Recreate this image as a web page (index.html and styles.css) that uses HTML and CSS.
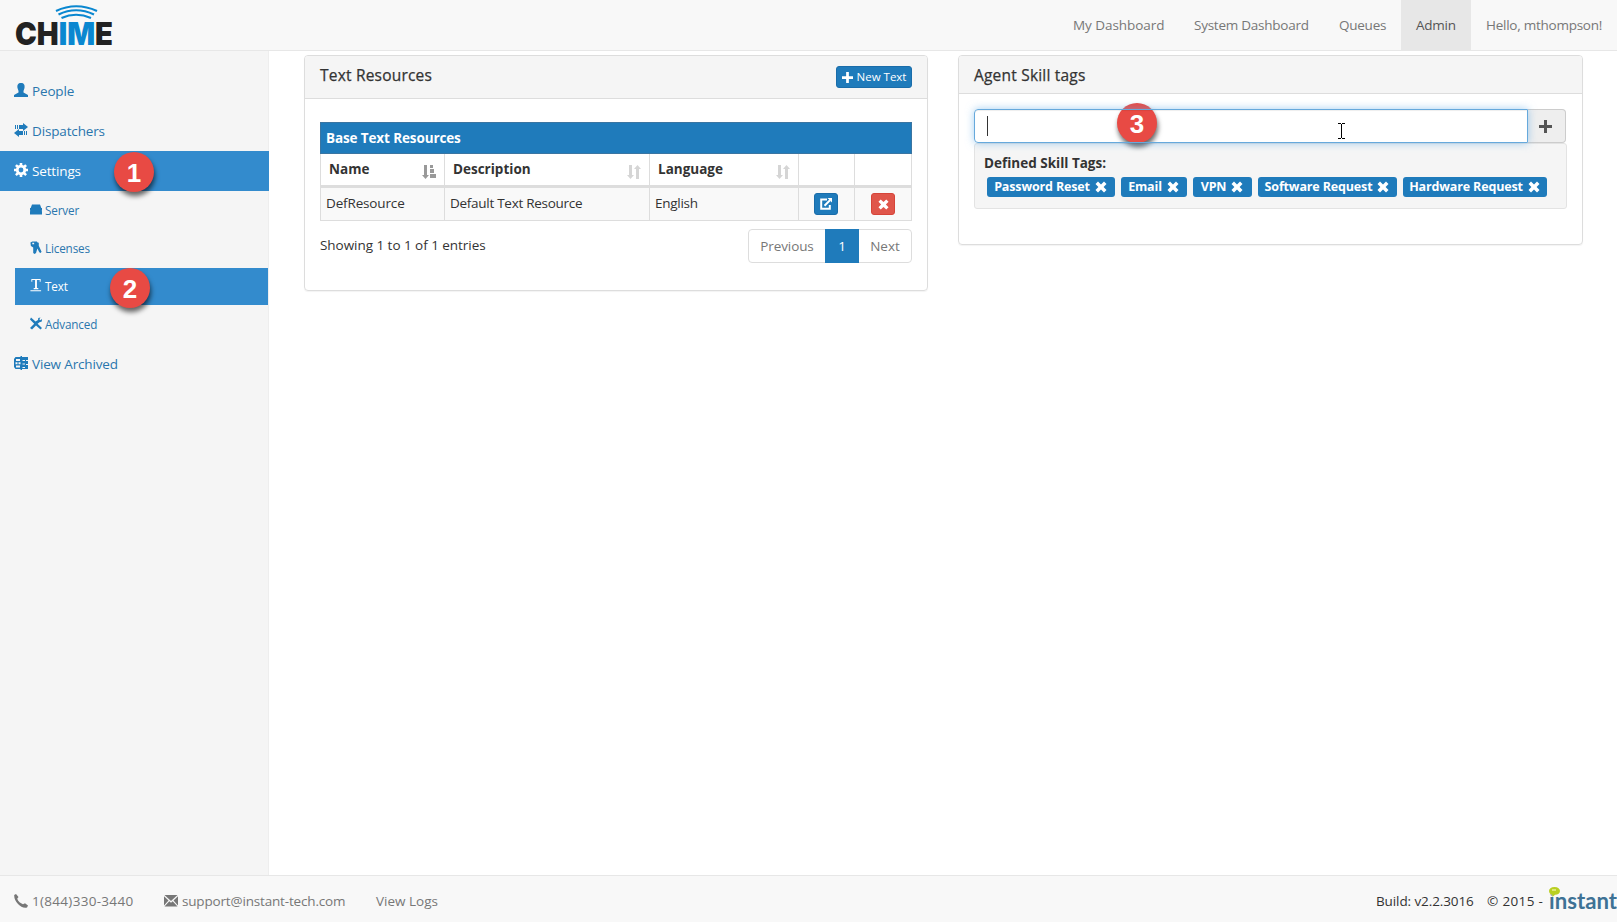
FILE: index.html
```html
<!DOCTYPE html>
<html lang="en">
<head>
<meta charset="utf-8">
<title>Chime - Text Resources</title>
<link rel="stylesheet" href="styles.css">
</head>
<body>
<svg class="defs" width="0" height="0">
  <symbol id="plus" viewBox="0 0 12 12"><path d="M4.5 0h3v4.5H12v3H7.5V12h-3V7.5H0v-3h4.5z"/></symbol>
  <symbol id="cross" viewBox="0 0 12 12"><path d="M3 .5 6 3.4 9 .5 11.5 3 8.6 6l2.9 3L9 11.500 6 8.600 3 11.500.5 9l2.900-3L.5 3z"/></symbol>
  <symbol id="sort" viewBox="0 0 14 14"><path d="M2 0h3v10h2l-3.500 4L0 10h2zM9 14V4H7l3.500-4L14 4h-2v10z"/></symbol>
</svg>
<header class="navbar">
  <svg class="logo" width="100" height="50" viewBox="0 0 100 50">
    <text x="0" y="44.500" textLength="98" lengthAdjust="spacingAndGlyphs">CH<tspan class="im">IM</tspan>E</text>
    <path d="M41 11Q61 1.500 82 11M43.500 14.500Q61 6 79 14.500M46.500 18Q61 11.500 76 18" fill="none" stroke="#0a87d0" stroke-width="2.200"/>
  </svg>
  <nav class="menu">
    <a class="m1">My Dashboard</a><a class="m2">System Dashboard</a><a class="m3">Queues</a><a class="m4 active">Admin</a><a class="m5">Hello, mthompson!</a>
  </nav>
</header>
<div class="body">
  <aside class="sidebar">
    <a class="item"><svg viewBox="0 0 14 14"><path d="M7 0C4 0 3 2 3.500 5L4.500 8v1.500L0 12v2h14v-2L9.500 9.500V8l1-3C11 2 10 0 7 0z"/></svg><span>People</span></a>
    <a class="item"><svg viewBox="0 0 14 14"><path d="M1 2h1v4H1zM3 2h1v4H3zM5 2h4V0l5 4-5 4V6H5zM13 8h-1v4h1zM11 8h-1v4h1zM9 12H5v2L0 10l5-4v2h4z"/></svg><span>Dispatchers</span></a>
    <a class="item active"><svg viewBox="0 0 14 14"><path fill-rule="evenodd" d="M5.700 0h2.600v2l1.500.6L11.200 1.200 13 3l-1.500 1.400.6 1.300H14v2.600h-2l-.6 1.400L13 11.200 11.200 13l-1.500-1.500-1.400.6V14H5.700v-2l-1.400-.6L2.800 13 1 11.200l1.500-1.500L2 8.300H0V5.700h2l.6-1.300L1 3l1.800-1.800 1.500 1.400L5.700 2zM7 4.600a2.400 2.400 0 1 0 0 4.800 2.400 2.400 0 0 0 0-4.800z"/></svg><span>Settings</span></a>
    <div class="sub">
      <a class="item"><svg viewBox="0 0 12 12"><path d="M2 1h8l1.300 3.500H12V7l-.5.400.5.400V11H0V7.800l.5-.4L0 7V4.500h.7z"/></svg><span>Server</span></a>
      <a class="item"><svg viewBox="0 0 12 14"><path fill-rule="evenodd" d="M0 1.500 2 .5h5l.7 1.200L9 2v3l3 6.500-1 1.500-1.500-1L7.500 8 6 13l-1.500 1L3 13V7L.5 5.500zM2 2v1.500h2V2z"/></svg><span>Licenses</span></a>
      <a class="item active"><svg viewBox="0 0 12 14"><path d="M1 0h10v3h-1V1.200H7v8.600h1.500V11h-5V9.800H5V1.200H2V3H1zM0 12h11.500v1.200H0z"/></svg><span>Text</span></a>
      <a class="item"><svg viewBox="0 0 12 12"><path d="M1 0 5.500 4 8 2.500 8.300.5 10.500 0 9.300 1.800l1 1L12 1.500l-.2 2.500-2.300.8L7.600 6.200 12 10.500 10.500 12 6 8 2 12 0 10.500 4.200 6.200 0 2z"/></svg><span>Advanced</span></a>
    </div>
    <a class="item"><svg viewBox="0 0 14 14"><path fill-rule="evenodd" d="M1.500 1h5V0H8v1h6v3h-2v1h2v3h-2v1h2v4H8v1H6.500v-1h-5L0 11V3zM2 3v2h4V3zM1.500 6.300v1.900h2V6.300zM4.500 6.300v1.900h2V6.300zM2 9.500v2h4v-2zM8.500 4v1H11V4zM8.500 7.500v1H11v-1zM8.500 11v1H11v-1z"/></svg><span>View Archived</span></a>
  </aside>
  <main class="content">
    <section class="panel panel-text">
      <div class="head"><h3 class="t1">Text Resources</h3><button class="btn new"><svg width="11" height="11"><use href="#plus"/></svg><span>New Text</span></button></div>
      <div class="inner">
        <table>
          <colgroup><col class="c1"><col class="c2"><col class="c3"><col class="c4"><col class="c5"></colgroup>
          <tr class="title"><th colspan="5">Base Text Resources</th></tr>
          <tr class="cols">
            <th><div>Name<svg class="on" width="14" height="14"><path d="M2 0h3v10h2l-3.500 4L0 10h2zM8 0h3v3H8zM8 4h4v4H8zM8 9h6v4H8z"/></svg></div></th>
            <th><div>Description<svg width="14" height="14"><use href="#sort"/></svg></div></th>
            <th><div>Language<svg width="14" height="14"><use href="#sort"/></svg></div></th><th></th><th></th>
          </tr>
          <tr class="data"><td>DefResource</td><td>Default Text Resource</td><td>English</td>
            <td class="act"><button class="btn sq"><svg width="12" height="12" viewBox="0 0 12 12"><path d="M7 1.500H1.200v9.300h8.600V7M4.500 7.800 10 2.200" fill="none" stroke="#fff" stroke-width="2"/><path d="M7.500 0H12v4.500z"/></svg></button></td>
            <td class="act"><button class="btn sq red"><svg width="11" height="11"><use href="#cross"/></svg></button></td></tr>
        </table>
        <div class="under"><span class="info">Showing 1 to 1 of 1 entries</span>
          <div class="pages"><a class="prev">Previous</a><a class="cur">1</a><a class="next">Next</a></div></div>
      </div>
    </section>
    <section class="panel panel-tags">
      <div class="head"><h3 class="t2">Agent Skill tags</h3></div>
      <div class="inner">
        <div class="group"><div class="field"><i class="caret"></i></div><div class="addon"><svg width="13" height="13" viewBox="0 0 13 13"><path d="M5 0h3v5h5v3H8v5H5V8H0V5h5z"/></svg></div></div>
        <div class="well"><b class="defined">Defined Skill Tags:</b>
          <div class="tags">
            <span class="tag g1"><b>Password Reset</b><svg width="12" height="12"><use href="#cross"/></svg></span>
            <span class="tag g2"><b>Email</b><svg width="12" height="12"><use href="#cross"/></svg></span>
            <span class="tag g3"><b>VPN</b><svg width="12" height="12"><use href="#cross"/></svg></span>
            <span class="tag g4"><b>Software Request</b><svg width="12" height="12"><use href="#cross"/></svg></span>
            <span class="tag g5"><b>Hardware Request</b><svg width="12" height="12"><use href="#cross"/></svg></span>
          </div>
        </div>
      </div>
    </section>
  </main>
</div>
<footer class="footer">
  <a class="phone"><svg width="14" height="14" viewBox="0 0 14 14"><path d="M2 0 4.500 3 3.200 4.800Q5 9 9 10.200L11 9.200 14 11.500 13 13.500Q8 14.500 4 10T.2 1z"/></svg><span>1(844)330-3440</span></a>
  <a class="mail"><svg width="14" height="12" viewBox="0 0 14 12"><path d="M.5 0h13L7 6zM0 1.300 4.500 5.500 0 10.500zM14 1.300 9.500 5.500 14 10.500zM5.300 6.200 7 7.800l1.700-1.600 4.800 5.300H.5z"/></svg><span>support@instant-tech.com</span></a>
  <a class="logs">View Logs</a>
  <span class="build">Build: v2.2.3016</span><span class="copy">© 2015 -</span>
  <svg class="instant" width="68" height="46" viewBox="0 0 68 46"><text x="0" y="33" textLength="68" lengthAdjust="spacingAndGlyphs">instant</text><path fill="#f8f8f8" d="M0 14h6v4.500H0z"/><path fill="#b9cf22" d="M5.500 11C2 11 0 12.800 0 15s2 3.600 3.300 3.800L3.500 21l2.500-2.200c3 0 5-1.600 5-3.800s-2-4-5.500-4z"/><path fill="#dce67a" d="M3 13h4v2H3z"/></svg>
</footer>
<div class="callout k1">1</div><div class="callout k2">2</div><div class="callout k3">3</div>
<svg class="cursor" width="7" height="16" viewBox="0 0 7 16"><path d="M0 .5h3M4 .5h3M3.500 1v14M0 15.500h3M4 15.500h3" stroke="#000"/></svg>
</body>
</html>
```
FILE: styles.css
```css
* { box-sizing: border-box; }
body { margin: 0; height: 922px; overflow: hidden; display: flex; flex-direction: column; position: relative; background: #fff; color: #333; font: 13.5px/20px "Open Sans", sans-serif; }
svg { fill: currentColor; flex: none; display: block; }
.defs { position: absolute; }
a, span, b, h3, th, td { white-space: nowrap; }
.navbar { height: 51px; flex: none; display: flex; justify-content: space-between; background: #f8f8f8; border-bottom: 1px solid #e7e7e7; padding-left: 15px; }
.logo text { font: 900 32px Inter, sans-serif; fill: #222; }
.logo .im { fill: #0a87d0; }
.menu { display: flex; color: #777; letter-spacing: -.25px; }
.menu a { padding: 15px 0 15px 15px; }
.m1 { width: 121px; letter-spacing: -.05px; } .m2 { width: 145px; } .m3 { width: 77px; } .m4 { width: 70px; } .m5 { width: 146px; }
.menu .m4 { background: #e7e7e7; color: #555; }
.body { flex: 1; display: flex; min-height: 0; }
.sidebar { width: 269px; flex: none; background: #f5f5f5; border-right: 1px solid #eee; padding-top: 20px; color: #2a76ad; letter-spacing: -.15px; }
.item { height: 40px; display: flex; align-items: center; gap: 4px; padding-left: 14px; }
.item svg { width: 14px; height: 14px; fill: #1f7bbb; position: relative; top: -1px; }
.item.active { background: #338bcd; color: #fff; }
.item.active svg { fill: #fff; }
.sidebar > .item.active { margin-right: -1px; }
.sub { padding: 1px 0 0 15px; display: grid; gap: 1px; }
.sub .item { height: 37px; padding: 0 0 2px 15px; gap: 3px; font-size: 11.7px; }
.sub .item svg { width: 12px; height: 13px; top: 0; }
.sub + .item { margin-top: 1px; }
.content { flex: 1; display: flex; gap: 30px; align-items: flex-start; padding: 4px 0 0 35px; }
.panel { border: 1px solid #ddd; border-radius: 4px; box-shadow: 0 1px 1px rgba(0,0,0,.05); overflow: hidden; }
.panel-text { width: 624px; height: 236px; }
.panel-tags { width: 625px; height: 190px; }
.head { display: flex; justify-content: space-between; background: #f5f5f5; border-bottom: 1px solid #ddd; padding: 10px 15px; height: 38px; }
.panel-text .head { height: 43px; }
h3 { margin: -1px 0 0; font-size: 15.5px; line-height: 20px; font-weight: 500; letter-spacing: .2px; -webkit-text-stroke: .25px #333; }
.btn { background: #1f7bbb; border: 1px solid #1a6daa; border-radius: 3px; color: #fff; height: 22px; padding: 0; display: flex; align-items: center; justify-content: center; gap: 4px; font: 11.5px/18px "Open Sans", sans-serif; }
.new { width: 76px; }
.sq { width: 24px; margin: 0 auto; position: relative; left: -1px; }
.red { background: #e0564b; border-color: #d6453a; left: 0; }
.inner { padding: 23px 15px 0; }
table { width: 592px; table-layout: fixed; border-collapse: collapse; }
.c1 { width: 124px; } .c2 { width: 205px; } .c3 { width: 149px; } .c4 { width: 56px; }
th, td { border: 1px solid #ddd; padding: 0 5px; text-align: left; }
.title th { background: #1f7bbb; color: #fff; height: 31px; padding-bottom: 1px; border-color: #3a75a2; letter-spacing: -.12px; }
.cols th { height: 33px; padding: 0 8px; border-bottom: 3px solid #ddd; }
.cols div { display: flex; justify-content: space-between; align-items: center; height: 28px; padding-bottom: 1px; }
.cols svg { fill: #d5d5d5; position: relative; top: 3px; }
.cols .on { fill: #999; }
.data td { height: 34px; background: #f9f9f9; padding-bottom: 3px; letter-spacing: -.15px; }
.data td + td { letter-spacing: -.28px; }
.data .act { padding: 0; }
.under { display: flex; justify-content: space-between; padding-top: 8px; }
.info { padding-top: 6px; letter-spacing: -.04px; }
.pages { display: flex; height: 34px; width: 164px; border: 1px solid #ddd; border-radius: 4px; color: #777; line-height: 33px; text-align: center; }
.prev { width: 76px; letter-spacing: -.1px; } .next { width: 52px; }
.cur { width: 34px; margin: -1px 0; line-height: 35px; background: #1f7bbb; color: #fff; }
.panel-tags .inner { padding-top: 15px; }
.group { display: flex; height: 34px; }
.field { width: 554px; border: 1px solid #66a9dc; border-radius: 4px 0 0 4px; box-shadow: 0 0 8px rgba(102,175,233,.6), inset 0 1px 1px rgba(0,0,0,.07); padding: 6px 12px; z-index: 1; }
.caret { display: block; width: 1px; height: 20px; background: #333; }
.addon { width: 38px; padding-right: 2px; background: #eee; border: 1px solid #ccc; border-left: 0; border-radius: 0 4px 4px 0; display: flex; align-items: center; justify-content: center; color: #555; }
.well { height: 66px; width: 593px; background: #f5f5f5; border: 1px solid #e3e3e3; border-radius: 3px; padding: 8px 9px; }
.defined { display: block; line-height: 22px; }
.tags { display: flex; gap: 6px; padding: 3px 0 0 3px; }
.tag { height: 20px; display: flex; align-items: center; justify-content: center; gap: 5px; padding-right: 1px; background: #1f7bbb; border-radius: 3px; color: #fff; font-size: 12.5px; letter-spacing: -.15px; }
.g1 { width: 128px; } .g2 { width: 66px; } .g3 { width: 59px; } .g4 { width: 139px; } .g5 { width: 144px; }
.footer { height: 47px; flex: none; background: #f8f8f8; border-top: 1px solid #e7e7e7; display: flex; align-items: center; color: #777; padding: 4px 0 0 14px; }
.footer a { display: flex; align-items: center; gap: 4px; }
.phone { width: 150px; letter-spacing: .3px; } .mail { width: 212px; letter-spacing: -.17px; } .logs { width: 100px; }
.build { margin-left: auto; width: 111px; color: #333; letter-spacing: -.1px; }
.copy { width: 62px; color: #333; letter-spacing: .35px; }
.instant { margin-top: -4px; }
.instant text { font: 700 23px Lato, sans-serif; fill: #3e7295; }
.callout { position: absolute; width: 40px; height: 40px; border-radius: 50%; background: #e84a44; color: #fff; box-shadow: 1px 4px 5px rgba(0,0,0,.6); font: 700 26px/42px "Liberation Sans", sans-serif; text-align: center; }
.k1 { left: 114px; top: 152px; } .k2 { left: 110px; top: 268px; } .k3 { left: 1117px; top: 103px; }
.cursor { position: absolute; left: 1338px; top: 123px; }
```
